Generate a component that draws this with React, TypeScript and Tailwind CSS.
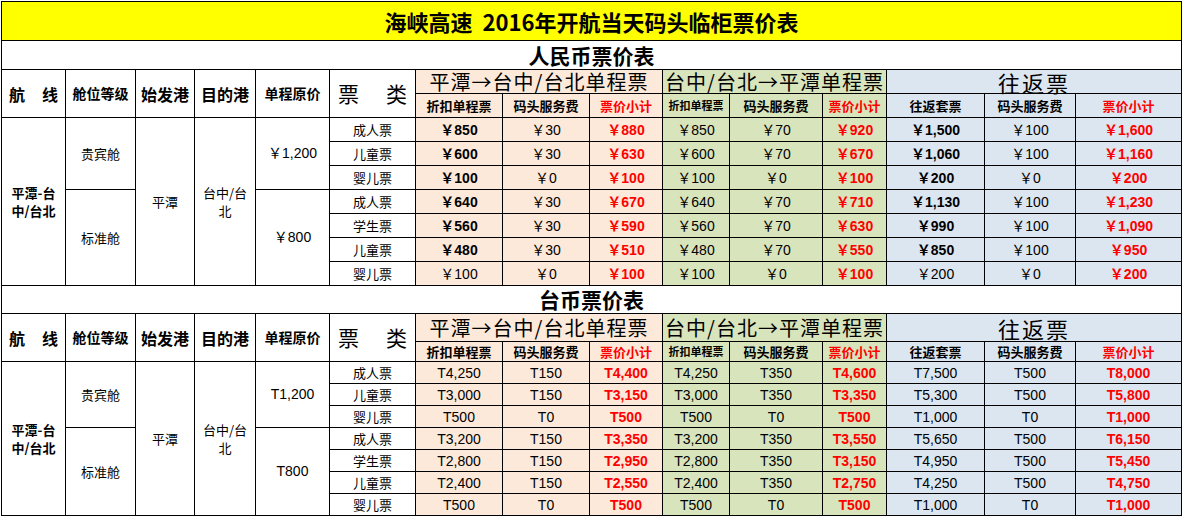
import React from "react";

type Cell = { v: string; b?: boolean };
type Row = { type: string; cells: Cell[] };

const FONT = "font-['Liberation_Sans','Noto_Sans_CJK_SC',sans-serif]";
const CJK = "font-['Noto_Sans_CJK_SC','Liberation_Sans',sans-serif]";

const colW = [64, 70, 59, 61, 74, 86, 87, 87, 73, 67, 93, 64, 98, 91, 106];

const b = (v: string): Cell => ({ v, b: true });
const n = (v: string): Cell => ({ v });

const rmb: Row[] = [
  { type: "成人票", cells: [b("￥850"), n("￥30"), n("￥880"), n("￥850"), n("￥70"), n("￥920"), b("￥1,500"), n("￥100"), n("￥1,600")] },
  { type: "儿童票", cells: [b("￥600"), n("￥30"), n("￥630"), n("￥600"), n("￥70"), n("￥670"), b("￥1,060"), n("￥100"), n("￥1,160")] },
  { type: "婴儿票", cells: [b("￥100"), n("￥0"), n("￥100"), n("￥100"), n("￥0"), n("￥100"), b("￥200"), n("￥0"), n("￥200")] },
  { type: "成人票", cells: [b("￥640"), n("￥30"), n("￥670"), n("￥640"), n("￥70"), n("￥710"), b("￥1,130"), n("￥100"), n("￥1,230")] },
  { type: "学生票", cells: [b("￥560"), n("￥30"), n("￥590"), n("￥560"), n("￥70"), n("￥630"), b("￥990"), n("￥100"), n("￥1,090")] },
  { type: "儿童票", cells: [b("￥480"), n("￥30"), n("￥510"), n("￥480"), n("￥70"), n("￥550"), b("￥850"), n("￥100"), n("￥950")] },
  { type: "婴儿票", cells: [n("￥100"), n("￥0"), n("￥100"), n("￥100"), n("￥0"), n("￥100"), n("￥200"), n("￥0"), n("￥200")] },
];

const twd: Row[] = [
  { type: "成人票", cells: ["T4,250", "T150", "T4,400", "T4,250", "T350", "T4,600", "T7,500", "T500", "T8,000"].map(n) },
  { type: "儿童票", cells: ["T3,000", "T150", "T3,150", "T3,000", "T350", "T3,350", "T5,300", "T500", "T5,800"].map(n) },
  { type: "婴儿票", cells: ["T500", "T0", "T500", "T500", "T0", "T500", "T1,000", "T0", "T1,000"].map(n) },
  { type: "成人票", cells: ["T3,200", "T150", "T3,350", "T3,200", "T350", "T3,550", "T5,650", "T500", "T6,150"].map(n) },
  { type: "学生票", cells: ["T2,800", "T150", "T2,950", "T2,800", "T350", "T3,150", "T4,950", "T500", "T5,450"].map(n) },
  { type: "儿童票", cells: ["T2,400", "T150", "T2,550", "T2,400", "T350", "T2,750", "T4,250", "T500", "T4,750"].map(n) },
  { type: "婴儿票", cells: ["T500", "T0", "T500", "T500", "T0", "T500", "T1,000", "T0", "T1,000"].map(n) },
];

const bg = ["bg-[#fde9d9]", "bg-[#fde9d9]", "bg-[#fde9d9]", "bg-[#d8e4bc]", "bg-[#d8e4bc]", "bg-[#d8e4bc]", "bg-[#dce6f1]", "bg-[#dce6f1]", "bg-[#dce6f1]"];

const td = "border border-black p-0 text-center align-middle";

function Section({
  title,
  titleH,
  groupH,
  subH,
  rowH,
  rows,
  priceA,
  priceB,
}: {
  title: string;
  titleH: string;
  groupH: string;
  subH: string;
  rowH: string;
  rows: Row[];
  priceA: string;
  priceB: string;
}) {
  return (
    <>
      <tr className={titleH}>
        <td colSpan={15} className={`${td} ${CJK} text-[21px] font-bold leading-none`}>
          {title}
        </td>
      </tr>
      <tr className={groupH}>
        <td rowSpan={2} className={`${td} ${CJK} text-[16px] font-bold`}>
          <div className="flex justify-between px-[7px]">
            <span>航</span>
            <span>线</span>
          </div>
        </td>
        <td rowSpan={2} className={`${td} ${CJK} text-[14px] font-bold`}>舱位等级</td>
        <td rowSpan={2} className={`${td} ${CJK} text-[16px] font-bold`}>始发港</td>
        <td rowSpan={2} className={`${td} ${CJK} text-[16px] font-bold`}>目的港</td>
        <td rowSpan={2} className={`${td} ${CJK} text-[14px] font-bold`}>单程原价</td>
        <td rowSpan={2} className={`${td} ${CJK} text-[21px]`}>
          <div className="flex justify-between px-[8px]">
            <span>票</span>
            <span>类</span>
          </div>
        </td>
        <td colSpan={3} className={`${td} ${CJK} bg-[#fde9d9] text-[20px] leading-none tracking-[1px]`}>
          平潭→台中/台北单程票
        </td>
        <td colSpan={3} className={`${td} ${CJK} bg-[#d8e4bc] text-[20px] leading-none tracking-[1px]`}>
          台中/台北→平潭单程票
        </td>
        <td colSpan={3} className={`${td} ${CJK} bg-[#dce6f1] text-[22px] leading-none tracking-[2px]`}>
          往返票
        </td>
      </tr>
      <tr className={subH}>
        <td className={`${td} ${CJK} bg-[#fde9d9] text-[13px] font-bold leading-none`}>折扣单程票</td>
        <td className={`${td} ${CJK} bg-[#fde9d9] text-[13px] font-bold leading-none`}>码头服务费</td>
        <td className={`${td} ${CJK} bg-[#fde9d9] text-[13px] font-bold leading-none text-[#ff0000]`}>票价小计</td>
        <td className={`${td} ${CJK} bg-[#d8e4bc] text-[11px] font-bold leading-none`}>折扣单程票</td>
        <td className={`${td} ${CJK} bg-[#d8e4bc] text-[13px] font-bold leading-none`}>码头服务费</td>
        <td className={`${td} ${CJK} bg-[#d8e4bc] text-[13px] font-bold leading-none text-[#ff0000]`}>票价小计</td>
        <td className={`${td} ${CJK} bg-[#dce6f1] text-[13px] font-bold leading-none`}>往返套票</td>
        <td className={`${td} ${CJK} bg-[#dce6f1] text-[13px] font-bold leading-none`}>码头服务费</td>
        <td className={`${td} ${CJK} bg-[#dce6f1] text-[13px] font-bold leading-none text-[#ff0000]`}>票价小计</td>
      </tr>
      {rows.map((r, i) => (
        <tr key={i} className={rowH}>
          {i === 0 && (
            <>
              <td rowSpan={7} className={`${td} ${CJK} text-[13px] font-bold leading-[18px]`}>
                平潭-台
                <br />
                中/台北
              </td>
              <td rowSpan={3} className={`${td} ${CJK} text-[13px]`}>贵宾舱</td>
              <td rowSpan={7} className={`${td} ${CJK} text-[13px]`}>平潭</td>
              <td rowSpan={7} className={`${td} ${CJK} text-[13px] leading-[18px]`}>
                台中/台
                <br />
                北
              </td>
              <td rowSpan={3} className={`${td} ${FONT} text-[14px]`}>{priceA}</td>
            </>
          )}
          {i === 3 && (
            <>
              <td rowSpan={4} className={`${td} ${CJK} text-[13px]`}>标准舱</td>
              <td rowSpan={4} className={`${td} ${FONT} text-[14px]`}>{priceB}</td>
            </>
          )}
          <td className={`${td} ${CJK} text-[13px] leading-none`}>{r.type}</td>
          {r.cells.map((c, j) => {
            const red = j % 3 === 2;
            return (
              <td
                key={j}
                className={`${td} ${FONT} ${bg[j]} text-[14px] leading-none ${red ? "text-[#ff0000] font-bold" : c.b ? "font-bold" : ""}`}
              >
                {c.v}
              </td>
            );
          })}
        </tr>
      ))}
    </>
  );
}

export default function App() {
  return (
    <div className="w-[1183px] h-[518px] bg-white pt-px pl-px overflow-hidden text-black">
      <table className="table-fixed border-collapse w-[1181px]">
        <colgroup>
          {colW.map((w, i) => (
            <col key={i} style={{ width: w }} />
          ))}
        </colgroup>
        <tbody>
          <tr className="h-[39px]">
            <td colSpan={15} className={`${td} ${CJK} bg-[#ffff00] text-[22px] font-bold leading-none`}>
              海峡高速&nbsp;&nbsp;2016年开航当天码头临柜票价表
            </td>
          </tr>
          <Section
            title="人民币票价表"
            titleH="h-[29px]"
            groupH="h-[24px]"
            subH="h-[24px]"
            rowH="h-[24px]"
            rows={rmb}
            priceA="￥1,200"
            priceB="￥800"
          />
          <Section
            title="台币票价表"
            titleH="h-[28px]"
            groupH="h-[28px]"
            subH="h-[20px]"
            rowH="h-[22px]"
            rows={twd}
            priceA="T1,200"
            priceB="T800"
          />
        </tbody>
      </table>
    </div>
  );
}
